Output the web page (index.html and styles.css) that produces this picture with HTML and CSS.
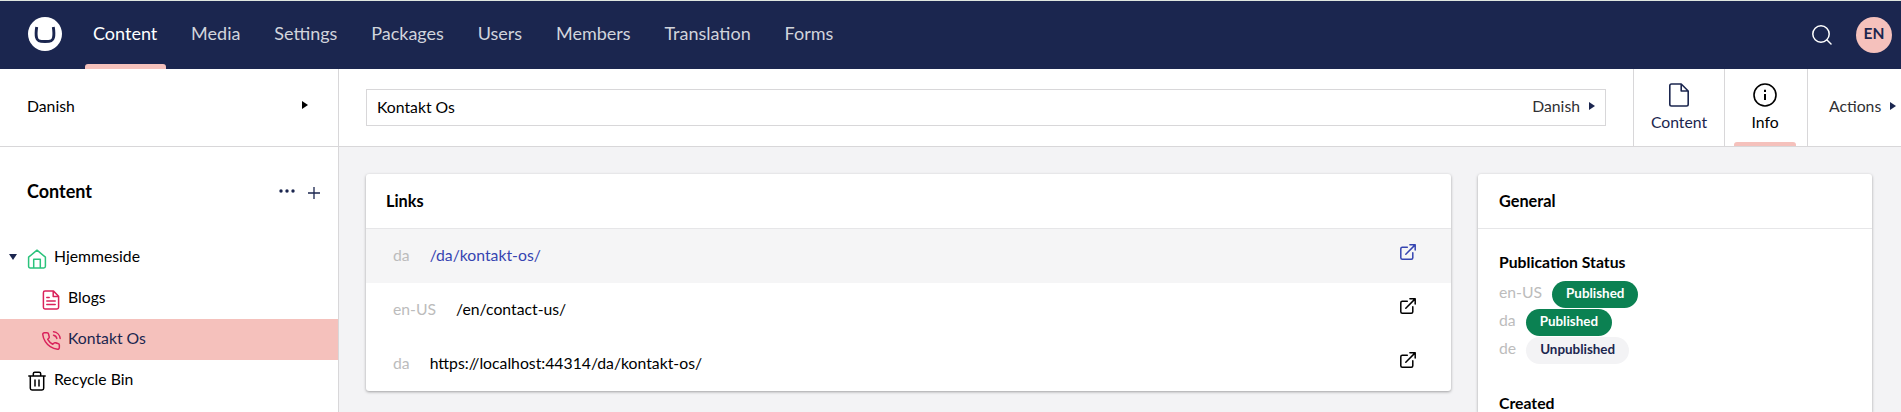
FILE: index.html
```html
<!DOCTYPE html>
<html lang="en">
<head>
<meta charset="utf-8">
<title>Kontakt Os</title>
<link rel="stylesheet" href="styles.css">
</head>
<body>
<header class="topbar">
  <svg class="logo" viewBox="0 0 34 34"><circle cx="17" cy="17" r="17" fill="#fff"/><path d="M8.700 10C8 14.500 7.900 18 8.500 20.500C9.200 23.700 11 24.500 17 24.500S24.800 23.700 25.500 20.500C26.100 18 26 14.500 25.300 10" fill="none" stroke="#1b264f" stroke-width="2.900"/></svg>
  <nav class="nav">
    <a class="nav-item active">Content</a><a class="nav-item">Media</a><a class="nav-item">Settings</a><a class="nav-item">Packages</a><a class="nav-item">Users</a><a class="nav-item">Members</a><a class="nav-item">Translation</a><a class="nav-item">Forms</a>
  </nav>
  <svg class="search" viewBox="0 0 20 20" fill="none" stroke="#fff" stroke-width="1.500" stroke-linecap="round"><circle cx="9" cy="9" r="8.200"/><path d="M15 15l4 4"/></svg>
  <span class="avatar">EN</span>
</header>
<div class="app">
  <aside class="sidebar">
    <div class="language"><span>Danish</span><i class="caret"></i></div>
    <div class="tree-head">
      <h1>Content</h1>
      <svg class="dots" viewBox="0 0 16 4" fill="#1b264f"><circle cx="2" cy="2" r="1.700"/><circle cx="8" cy="2" r="1.700"/><circle cx="14" cy="2" r="1.700"/></svg>
      <svg class="plus" viewBox="0 0 12 12" stroke="#1b264f" stroke-width="1.300"><path d="M6 0v12M0 6h12"/></svg>
    </div>
    <ul class="tree">
      <li class="node root"><i class="caret down"></i>
        <svg class="icon green" viewBox="0 0 20 20"><path d="M1.600 8.200L10 1.200l8.400 7V17.200q0 1.700-1.700 1.700H3.300q-1.700 0-1.700-1.700zM6.700 18.900V10.300h6.600v8.600"/></svg><span>Hjemmeside</span></li>
      <li class="node child">
        <svg class="icon red" viewBox="0 0 20 20"><path d="M12.500 1.100H4Q2.400 1.100 2.400 2.700V17.300Q2.400 18.900 4 18.900H16Q17.600 18.900 17.600 17.300V6.200zM12.200 1.300V6.400H17.400M5.800 7.400H8.200M5.800 11h8.400M5.800 14.600h8.400"/></svg><span>Blogs</span></li>
      <li class="node child selected">
        <svg class="icon red" viewBox="0 0 24 24"><path d="M15.050 5A5 5 0 0 1 19 8.950M15.050 1A9 9 0 0 1 23 8.940M22 16.920v3a2 2 0 0 1-2.180 2 19.790 19.790 0 0 1-8.630-3.070 19.500 19.500 0 0 1-6-6A19.790 19.790 0 0 1 2.120 4.180 2 2 0 0 1 4.110 2h3a2 2 0 0 1 2 1.720c.127.960.362 1.903.7 2.810a2 2 0 0 1-.450 2.110L8.090 9.910a16 16 0 0 0 6 6l1.270-1.270a2 2 0 0 1 2.110-.450c.907.339 1.850.573 2.810.7A2 2 0 0 1 22 16.920z" stroke-width="1.800"/></svg><span>Kontakt Os</span></li>
      <li class="node root bin">
        <svg class="icon" viewBox="0 0 20 20"><path d="M1.800 4.900H18.200M3.300 4.900V17.200q0 1.700 1.700 1.700H15q1.700 0 1.700-1.700V4.900M6.300 4.700V2.800q0-1.500 1.500-1.500h4.400q1.500 0 1.500 1.500V4.700M8 9v6M12 9v6"/></svg><span>Recycle Bin</span></li>
    </ul>
  </aside>
  <main class="editor">
    <div class="editor-head">
      <div class="name"><span>Kontakt Os</span><span class="variant">Danish<i class="caret"></i></span></div>
      <div class="tab tab-content"><svg viewBox="0 0 24 24"><path d="M14.200 1H4.500Q2.800 1 2.800 2.700V21.300Q2.800 23 4.500 23H19.500Q21.200 23 21.200 21.300V8zM14.200 1V8H21.200"/></svg><span>Content</span></div>
      <div class="tab tab-info"><svg viewBox="0 0 24 24"><circle cx="12" cy="12" r="11"/><path d="M12 11v6M12 6.800v2.100" stroke-width="2"/></svg><span>Info</span></div>
      <div class="actions"><span>Actions</span><i class="caret"></i></div>
    </div>
    <div class="panels">
      <section class="card links">
        <h2>Links</h2>
        <div class="link hover"><span class="culture">da</span><a>/da/kontakt-os/</a><svg class="ext" viewBox="0 0 16 16"><path d="M7.300 3.200H2.300Q.8 3.200.8 4.700V13.700Q.8 15.200 2.300 15.200H11.300Q12.800 15.200 12.800 13.700V8.700M5.800 10.200L15.100.9M9.900.8H15.200V6.100"/></svg></div>
        <div class="link"><span class="culture">en-US</span><a>/en/contact-us/</a><svg class="ext" viewBox="0 0 16 16"><path d="M7.300 3.200H2.300Q.8 3.200.8 4.700V13.700Q.8 15.200 2.300 15.200H11.300Q12.800 15.200 12.800 13.700V8.700M5.800 10.200L15.100.9M9.900.8H15.200V6.100"/></svg></div>
        <div class="link"><span class="culture">da</span><a>https://localhost:44314/da/kontakt-os/</a><svg class="ext" viewBox="0 0 16 16"><path d="M7.300 3.200H2.300Q.8 3.200.8 4.700V13.700Q.8 15.200 2.300 15.200H11.300Q12.800 15.200 12.800 13.700V8.700M5.800 10.200L15.100.9M9.900.8H15.200V6.100"/></svg></div>
      </section>
      <section class="card general">
        <h2>General</h2>
        <div class="general-body">
          <h3>Publication Status</h3>
          <div class="status"><span class="culture">en-US</span><b class="badge">Published</b></div>
          <div class="status"><span class="culture">da</span><b class="badge">Published</b></div>
          <div class="status"><span class="culture">de</span><b class="badge gray">Unpublished</b></div>
          <h3 class="created">Created</h3>
        </div>
      </section>
    </div>
  </main>
</div>
</body>
</html>
```
FILE: styles.css
```css
* { box-sizing: border-box; }
body {
  margin: 0;
  height: 412px;
  overflow: hidden;
  font: 15.750px/20px Lato, "Liberation Sans", sans-serif;
  color: #000;
  background: #f3f3f5;
}
h1, h2, h3, ul { margin: 0; padding: 0; list-style: none; }
svg { flex: none; display: block; }

.topbar {
  height: 69px;
  border-top: 1px solid #dfe6df;
  background: #1b264f;
  display: flex;
  align-items: center;
  padding: 0 9px 0 28px;
}
.logo { width: 34px; height: 34px; margin-bottom: 2px; }
.nav { display: flex; height: 68px; margin-left: 23px; flex: 1; }
.nav-item {
  padding: 0 9px 0 8px;
  margin-right: 16.850px;
  font-size: 18px;
  line-height: 65px;
  color: #d1d4dc;
}
.nav-item.active { color: #fff; position: relative; }
.nav-item.active::after {
  content: "";
  position: absolute;
  left: 0; right: 0; bottom: 0;
  height: 5px;
  border-radius: 3px 3px 0 0;
  background: #f5c1bc;
}
.search { width: 20px; height: 20px; margin-right: 24px; }
.avatar {
  width: 36px; height: 36px;
  border-radius: 50%;
  background: #f5c1bc;
  color: #1b264f;
  font-size: 15.500px;
  font-weight: 700;
  line-height: 33px;
  text-align: center;
}

.caret {
  display: block;
  width: 0; height: 0;
  border-left: 6px solid #000;
  border-top: 4.500px solid transparent;
  border-bottom: 4.500px solid transparent;
}
.caret.down {
  border-top: 6px solid #1b264f;
  border-left: 4.500px solid transparent;
  border-right: 4.500px solid transparent;
  border-bottom: 0;
}

.app { display: flex; height: 343px; overflow: hidden; }
.sidebar { width: 339px; flex: none; background: #fff; border-right: 1px solid #d8d7d9; }
.language {
  height: 78px;
  border-bottom: 1px solid #d8d7d9;
  display: flex;
  justify-content: space-between;
  align-items: center;
  padding: 0 30px 3px 27px;
}
.language .caret { margin-bottom: 3px; }
.tree-head { display: flex; align-items: center; height: 90px; padding: 0 18px 0 27px; }
.tree-head h1 { flex: 1; font-size: 18px; font-weight: 700; line-height: 22px; padding-bottom: 2px; }
.dots { width: 16px; height: 4px; margin-bottom: 2px; }
.plus { width: 12px; height: 12px; margin-left: 13px; margin-top: 2px; }
.node { display: flex; align-items: center; height: 41px; }
.node span { padding-bottom: 3px; }
.icon { width: 20px; height: 20px; margin: 2px 7px 0 0; fill: none; stroke: #000; stroke-width: 1.500; stroke-linejoin: round; stroke-linecap: round; }
.green { stroke: #2bc37c; }
.red { stroke: #d9225b; }
.root { padding-left: 9px; }
.root .caret { margin-right: 9px; margin-bottom: 2px; }
.root .icon { margin-left: 1px; }
.root.bin { padding-left: 26px; padding-bottom: 1px; }
.child { padding-left: 41px; }
.selected { background: #f5c1bc; color: #1b264f; }

.editor { flex: 1; min-width: 0; }
.editor-head { display: flex; height: 78px; background: #fff; border-bottom: 1px solid #d8d7d9; color: #1b264f; }
.name {
  width: 1240px; height: 37px;
  margin: 20px 27px 0;
  border: 1px solid #d8d7d9;
  display: flex;
  justify-content: space-between;
  align-items: center;
  padding: 0 10px 0 10px;
  color: #000;
}
.name > span:first-child { padding-bottom: 1px; }
.variant { display: flex; align-items: center; gap: 9px; padding-bottom: 4px; color: #303033; }
.variant .caret, .actions .caret { border-left-color: #1b264f; }
.tab { border-left: 1px solid #d8d7d9; display: flex; flex-direction: column; align-items: center; padding-top: 14px; gap: 5px; }
.tab svg { width: 24px; height: 24px; fill: none; stroke: currentColor; stroke-width: 1.600; stroke-linejoin: round; }
.tab-content { width: 91px; }
.tab-info { width: 83px; padding-right: 2px; color: #000; position: relative; }
.tab-info::after {
  content: "";
  position: absolute;
  left: 9px; bottom: 0;
  width: 62px; height: 4px;
  border-radius: 3px 3px 0 0;
  background: #f5c1bc;
}
.actions { flex: 1; border-left: 1px solid #d8d7d9; display: flex; align-items: center; justify-content: space-between; padding: 0 5px 3px 21px; color: #303033; }

.panels { display: flex; align-items: flex-start; gap: 27px; padding: 27px 27px 0; height: 265px; }
.card { background: #fff; border-radius: 3px; box-shadow: 0 1px 3px rgba(0, 0, 0, .35); }
.card h2 { height: 55px; border-bottom: 1px solid #e6e6e8; padding-left: 20px; font-size: 16.300px; font-weight: 700; line-height: 54px; }
.links { width: 1085px; }
.general { width: 394px; height: 238px; border-radius: 3px 3px 0 0; }
.link { height: 54px; display: flex; align-items: center; padding: 0 35px 2px 27px; }
.link a { flex: 1; margin-left: 20px; }
.hover { background: #f5f5f6; }
.hover a { color: #3544b1; }
.culture { color: #bcbcbc; }
.ext { width: 16px; height: 16px; margin-bottom: 6px; fill: none; stroke: #000; stroke-width: 1.500; stroke-linecap: round; stroke-linejoin: round; }
.hover .ext { stroke: #3544b1; }
.general h2 { padding-left: 21px; }
.general-body { padding: 23px 21px 0; height: 183px; overflow: hidden; }
.general-body h3 { font-size: 15.750px; font-weight: 700; line-height: 20px; margin-bottom: 8px; }
.status { display: flex; height: 28px; }
.status .culture { line-height: 24px; }
.badge { height: 27px; margin: 1px 0 0 10px; padding: 0 14px; border-radius: 14px; background: #0b8152; color: #fff; font-size: 13.400px; line-height: 25px; }
.badge.gray { background: #f3f3f5; color: #1b264f; }
.general-body .created { margin: 29px 0 0; }
```
